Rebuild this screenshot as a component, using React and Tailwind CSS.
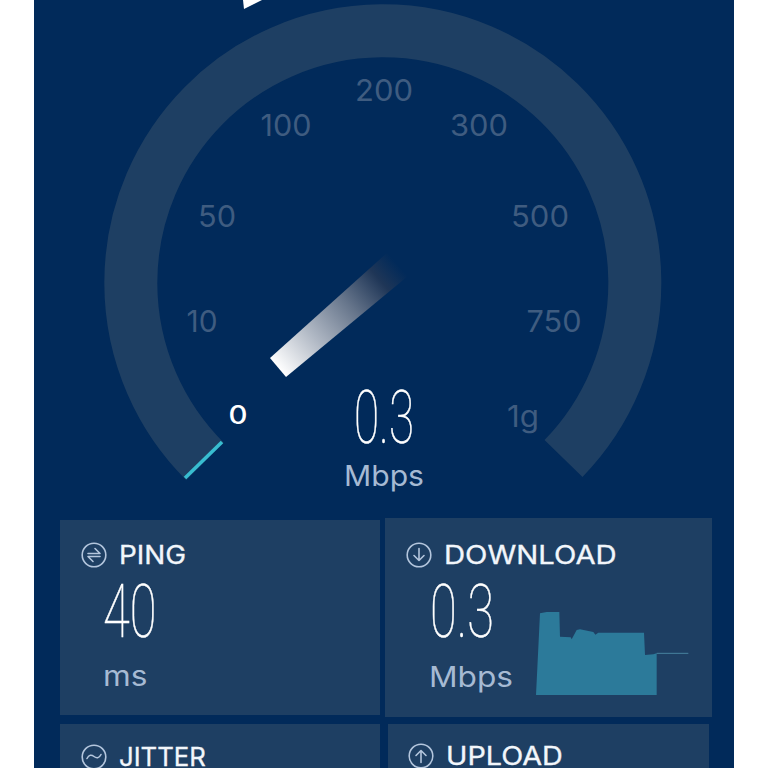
const FONT = "font-['Inter','Liberation_Sans',sans-serif]";
const THIN = "font-['Roboto','Liberation_Sans',sans-serif]";

function GaugeLabel({ x, y, w, children, fill = "#3f5c80", size = 30 }) {
  return (
    <text x={x} y={y} textAnchor="middle" textLength={w} lengthAdjust="spacingAndGlyphs"
      fontFamily="Inter, sans-serif" fontSize={size} fontWeight="400" fill={fill}>
      {children}
    </text>
  );
}

function Gauge() {
  return (
    <svg viewBox="34 0 700 518" className="block w-[700px] h-[518px]">
      <defs>
        <linearGradient id="needle" gradientUnits="userSpaceOnUse" x1="278" y1="368" x2="398" y2="265">
          <stop offset="0" stopColor="#ffffff" />
          <stop offset="0.3" stopColor="#b0b8c4" />
          <stop offset="0.6" stopColor="#66758b" />
          <stop offset="0.85" stopColor="#1f3657" />
          <stop offset="1" stopColor="#012a5a" />
        </linearGradient>
      </defs>
      <polygon points="243,0 262,0 244,9" fill="#ffffff" />
      <path d="M 204.8 461.2 A 252 252 0 1 1 563.5 458.5" fill="none" stroke="#1e3f63" strokeWidth="53" />
      <line x1="185" y1="478" x2="222" y2="442" stroke="#38bdd0" strokeWidth="3.5" />
      <GaugeLabel x={384} y={101} w={58}>200</GaugeLabel>
      <GaugeLabel x={286} y={136} w={51}>100</GaugeLabel>
      <GaugeLabel x={479} y={136} w={58}>300</GaugeLabel>
      <GaugeLabel x={217} y={227} w={38}>50</GaugeLabel>
      <GaugeLabel x={540} y={227} w={58}>500</GaugeLabel>
      <GaugeLabel x={202} y={332} w={31}>10</GaugeLabel>
      <GaugeLabel x={554} y={332} w={55}>750</GaugeLabel>
      <GaugeLabel x={523} y={427} w={32}>1g</GaugeLabel>
      <text x={238} y={424} textAnchor="middle" textLength={19} lengthAdjust="spacingAndGlyphs"
        fontFamily="Inter, sans-serif" fontSize={25} fontWeight="500" fill="#ffffff">0</text>
      <polygon points="270,358 286,377 408,276 388,252" fill="url(#needle)" />
      <text x={384} y={443} textAnchor="middle" textLength={60} lengthAdjust="spacingAndGlyphs"
        fontFamily="Roboto, sans-serif" fontSize={74} fontWeight="100" fill="#ffffff" stroke="#ffffff" strokeWidth="0.5">0.3</text>
      <text x={384} y={486} textAnchor="middle" textLength={80} lengthAdjust="spacingAndGlyphs"
        fontFamily="Inter, sans-serif" fontSize={29} fill="#a6bad3">Mbps</text>
    </svg>
  );
}

const Ring = ({ children }) => (
  <svg viewBox="0 0 26 26" className="w-[26px] h-[26px] shrink-0" fill="none" stroke="#b4c6dd" strokeWidth="1.6" strokeLinecap="round" strokeLinejoin="round">
    <circle cx="13" cy="13" r="11.8" />
    {children}
  </svg>
);

const PingIcon = () => <Ring><path d="M7 11.5h12l-5-5M19 14.5H7l5 5" /></Ring>;
const DownIcon = () => <Ring><path d="M13 6.5v12M8 13.5l5 5 5-5" /></Ring>;
const UpIcon = () => <Ring><path d="M13 19.5v-12M8 12.5l5-5 5 5" /></Ring>;
const JitterIcon = () => <Ring><path d="M6 14.5c2-4 4.5-4 7-2s5 2 7-2" /></Ring>;

function Title({ icon, stretch, children }) {
  return (
    <div className="flex items-center gap-[12px] h-[26px]">
      {icon}
      <span className={`${FONT} ${stretch} text-[25px] leading-none font-normal [-webkit-text-stroke:0.3px_#f2f6fb] text-[#f2f6fb] origin-left whitespace-nowrap`}>{children}</span>
    </div>
  );
}

function Chart() {
  const pts = [[18,285],[30,40],[50,36],[88,36],[90,110],[122,112],[125,118],[140,90],[150,88],[190,96],[196,104],[205,98],[342,98],[345,165],[370,163],[380,160],[380,285]];
  return (
    <svg viewBox="0 0 510 300" className="block w-[170px] h-[100px] shrink-0 mt-[32px]" aria-hidden="true">
      <polygon points={pts.map((p) => p.join(",")).join(" ")} fill="#2c7a9a" />
      <line x1="380" y1="160" x2="475" y2="160" stroke="#4f8fab" strokeWidth="2.5" />
    </svg>
  );
}

const DIGITS = `${THIN} text-[75px] leading-[56px] font-thin [-webkit-text-stroke:0.5px_#ffffff] text-white origin-left scale-x-[0.65] w-fit`;
const UNIT = `${FONT} text-[28px] leading-none text-[#a6bad3] origin-left scale-x-[1.13] w-fit`;

function App() {
  return (
    <div className="w-[768px] h-[768px] overflow-hidden bg-white">
      <div className="ml-[34px] w-[700px] h-[768px] bg-[#012a5a]">
        <Gauge />
        <div className="flex pl-[26px] items-start">
          <div className="w-[320px] flex flex-col gap-[9px] pt-[2px]">
            <div className="h-[195px] bg-[#1e3f63] pl-[21px] pt-[22px]">
              <Title icon={<PingIcon />} stretch="scale-x-[1.115]">PING</Title>
              <div className={`${DIGITS} ml-[22px] mt-[15px]`}>40</div>
              <div className={`${UNIT} ml-[22px] mt-[23px]`}>ms</div>
            </div>
            <div className="h-[195px] bg-[#1e3f63] pl-[21px] pt-[20px]">
              <Title icon={<JitterIcon />} stretch="scale-x-[1.03]">JITTER</Title>
            </div>
          </div>
          <div className="w-[327px] ml-[5px] flex flex-col gap-[7px]">
            <div className="h-[199px] bg-[#1e3f63] pl-[21px] pt-[24px]">
              <Title icon={<DownIcon />} stretch="scale-x-[1.17]">DOWNLOAD</Title>
              <div className="flex items-start">
                <div className="w-[124px]">
                  <div className={`${DIGITS} ml-[24px] mt-[15px]`}>0.3</div>
                  <div className={`${UNIT} ml-[23px] mt-[24px]`}>Mbps</div>
                </div>
                <Chart />
              </div>
            </div>
            <div className="mx-[3px] h-[195px] bg-[#1e3f63] pl-[20px] pt-[19px]">
              <Title icon={<UpIcon />} stretch="scale-x-[1.15]">UPLOAD</Title>
            </div>
          </div>
        </div>
      </div>
    </div>
  );
}

export default App;
